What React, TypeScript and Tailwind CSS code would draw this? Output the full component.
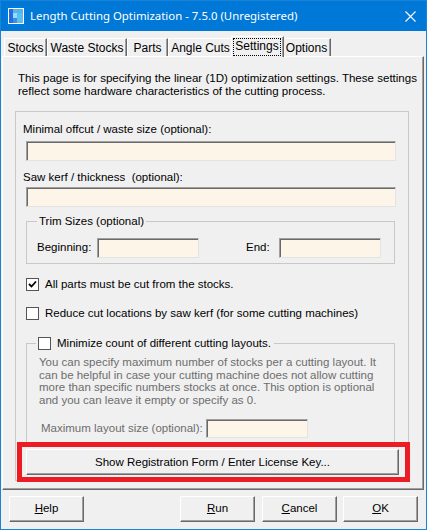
import React from "react";

const F = { fontFamily: '"Liberation Sans", Arial, sans-serif' };

function Input({ w, h = 19 }: { w: number; h?: number }) {
  return (
    <div
      className="bg-[#fcf5e8] border-t border-l border-t-[#a0a0a0] border-l-[#a0a0a0] border-b border-r border-b-[#e3e3e3] border-r-[#e3e3e3] shadow-[inset_1px_1px_0_#696969]"
      style={{ width: w, height: h }}
    />
  );
}

function Check({ checked }: { checked?: boolean }) {
  return (
    <div className="w-[13px] h-[13px] bg-white border border-[#555] flex items-center justify-center shrink-0">
      {checked && (
        <svg width="9" height="9" viewBox="0 0 9 9">
          <path d="M1 4 L3.5 6.5 L8 1.5" stroke="#000" strokeWidth="1.8" fill="none" />
        </svg>
      )}
    </div>
  );
}

function Btn({ children, className = "" }: { children: React.ReactNode; className?: string }) {
  return (
    <div
      className={
        "bg-[#f0f0f0] border-t border-l border-t-white border-l-white border-r border-b border-r-[#696969] border-b-[#696969] shadow-[inset_-1px_-1px_0_#a0a0a0] flex items-center justify-center text-black whitespace-nowrap " +
        className
      }
    >
      {children}
    </div>
  );
}

function Tab({ label, w, selected }: { label: string; w: number; selected?: boolean }) {
  if (selected) {
    return (
      <div
        className="relative z-10 -mx-[2px] h-[21px] -mb-px bg-[#f0f0f0] border-t border-l border-t-white border-l-white border-r border-r-[#696969] shadow-[inset_-1px_0_0_#a0a0a0] flex items-stretch pt-[1px] pl-[1px] pr-[2px] pb-[1px]"
        style={{ width: w + 4 }}
      >
        <span className="flex-1 border border-dotted border-black flex items-start justify-center pt-[1px] leading-[13px] text-[12px]">{label}</span>
      </div>
    );
  }
  return (
    <div
      className="h-[18px] bg-[#f0f0f0] border-t border-l border-t-white border-l-white border-r border-r-[#696969] shadow-[inset_-1px_0_0_#a0a0a0] flex items-center justify-center text-[12px] pt-[1px]"
      style={{ width: w }}
    >
      {label}
    </div>
  );
}

export default function App() {
  return (
    <div className="w-[427px] h-[530px] bg-[#1883d7] p-px flex flex-col text-black" style={F}>
      {/* Title bar */}
      <div className="h-[30px] bg-[#0078d7] flex items-center pl-[7px] pr-[10px] shrink-0">
        <svg width="16" height="16" viewBox="0 0 16 16" className="shrink-0">
          <rect x="0" y="0" width="16" height="16" fill="#ffffff" />
          <rect x="1" y="1" width="14" height="14" fill="#1e6fe0" />
          <rect x="5" y="1" width="10" height="4" fill="#4fb6f0" />
          <rect x="5" y="5" width="4" height="5" fill="#9fd8f7" />
          <rect x="9" y="5" width="6" height="10" fill="#5cbff2" />
          <rect x="5" y="10" width="4" height="5" fill="#3a8ee8" />
        </svg>
        <span className="ml-[6px] text-white text-[11.4px]" style={{ fontFamily: '"Noto Sans", "Liberation Sans", sans-serif' }}>
          Length Cutting Optimization - 7.5.0 (Unregistered)
        </span>
        <div className="flex-1" />
        <svg width="11" height="11" viewBox="0 0 11 11">
          <path d="M0.5 0.5 L10.5 10.5 M10.5 0.5 L0.5 10.5" stroke="#fff" strokeWidth="1.1" />
        </svg>
      </div>

      {/* Body */}
      <div className="flex-1 bg-[#f0f0f0] flex flex-col">
        {/* Tabs */}
        <div className="h-[20px] mt-[5px] ml-[3px] flex items-end">
          <Tab label="Stocks" w={43} />
          <Tab label="Waste Stocks" w={80} />
          <Tab label="Parts" w={41} />
          <Tab label="Angle Cuts" w={65} />
          <Tab label="Settings" w={49} selected />
          <Tab label="Options" w={49} />
        </div>

        {/* Panel */}
        <div className="relative ml-[1px] w-[422px] h-[434px] border-t border-l border-t-white border-l-white border-r border-b border-r-[#696969] border-b-[#696969] shadow-[inset_-1px_-1px_0_#a0a0a0] text-[11.5px] leading-[13px]">
          <div className="mt-[15px] ml-[15px] text-[11.55px] whitespace-nowrap">
            This page is for specifying the linear (1D) optimization settings. These settings
            <br />
            reflect some hardware characteristics of the cutting process.
          </div>

          {/* content frame */}
          <div className="ml-[12px] mt-[13px] w-[394px] h-[370px] border border-[#c8c8c8] flex flex-col">
            <div className="ml-[7px] mt-[11px]">Minimal offcut / waste size (optional):</div>
            <div className="ml-[10px] mt-[5px]">
              <Input w={370} h={20} />
            </div>
            <div className="ml-[7px] mt-[10px]">Saw kerf / thickness&nbsp; (optional):</div>
            <div className="ml-[10px] mt-[3px]">
              <Input w={370} h={20} />
            </div>

            {/* Trim sizes */}
            <div className="relative ml-[10px] mt-[14px] w-[369px] h-[43px] border border-[#c8c8c8] flex items-center">
              <div className="absolute -top-[7px] left-[10px] bg-[#f0f0f0] px-[2px] leading-[13px]">Trim Sizes (optional)</div>
              <div className="ml-[10px] mt-[10px] flex items-center w-full">
                <span className="w-[60px]">Beginning:</span>
                <Input w={102} h={20} />
                <span className="ml-[47px] w-[33px]">End:</span>
                <Input w={102} h={20} />
              </div>
            </div>

            <div className="ml-[10px] mt-[14px] flex items-center">
              <Check checked />
              <span className="ml-[6px]">All parts must be cut from the stocks.</span>
            </div>
            <div className="ml-[10px] mt-[16px] flex items-center">
              <Check />
              <span className="ml-[6px]">Reduce cut locations by saw kerf (for some cutting machines)</span>
            </div>

            {/* Minimize group */}
            <div className="relative ml-[10px] mt-[23px] w-[369px] h-[100px] border border-[#c8c8c8] border-b-0">
              <div className="absolute -top-[7px] left-[9px] bg-[#f0f0f0] pl-[2px] pr-[3px] flex items-center">
                <Check />
                <span className="ml-[6px]">Minimize count of different cutting layouts.</span>
              </div>
              <div className="ml-[12px] mt-[12px] text-[#6d6d6d] leading-[12.7px] whitespace-nowrap">
                You can specify maximum number of stocks per a cutting layout. It
                <br />
                can be helpful in case your cutting machine does not allow cutting
                <br />
                more than specific numbers stocks at once. This option is optional
                <br />
                and you can leave it empty or specify as 0.
              </div>
              <div className="ml-[14px] mt-[12px] flex items-center text-[#6d6d6d]">
                <span className="w-[165px]">Maximum layout size (optional):</span>
                <Input w={102} h={19} />
              </div>
            </div>

            <Btn className="ml-[10px] mt-[6px] w-[373px] h-[26px]">Show Registration Form / Enter License Key...</Btn>
          </div>

          {/* red highlight */}
          <div className="absolute left-[14px] top-[385px] w-[393px] h-[40px] border-[5px] border-[#ed1c24] pointer-events-none" />
        </div>

        {/* Bottom buttons */}
        <div className="flex mt-[6px] ml-[8px] text-[11.5px]">
          <Btn className="w-[75px] h-[26px]"><span><u>H</u>elp</span></Btn>
          <div className="w-[96px]" />
          <Btn className="w-[75px] h-[26px]"><span><u>R</u>un</span></Btn>
          <div className="w-[7px]" />
          <Btn className="w-[75px] h-[26px]"><span><u>C</u>ancel</span></Btn>
          <div className="w-[6px]" />
          <Btn className="w-[75px] h-[26px]"><span><u>O</u>K</span></Btn>
        </div>
      </div>
    </div>
  );
}
